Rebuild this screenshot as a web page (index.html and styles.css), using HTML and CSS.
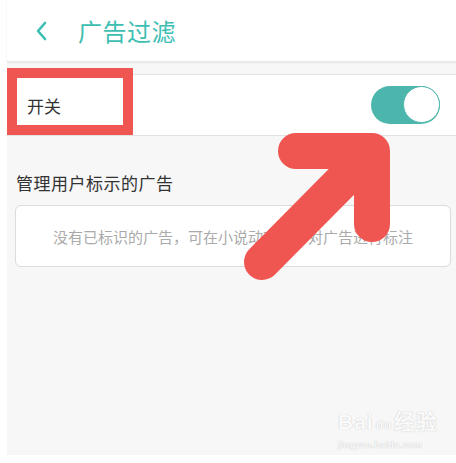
FILE: index.html
```html
<!DOCTYPE html>
<html lang="zh-CN">
<head>
    <meta charset="UTF-8">
    <meta name="viewport" content="width=device-width, initial-scale=1.0">
    <title>广告过滤</title>
    <link rel="stylesheet" href="styles.css">
</head>
<body>
    <div class="page">
        <div class="screen">
            <div class="header">
                <svg class="back" width="12" height="20" viewBox="0 0 12 20">
                    <path d="M9 2 L2 10 L9 18" fill="none" stroke="#3dbeb3" stroke-width="2.6" stroke-linecap="round" stroke-linejoin="round"/>
                </svg>
                <h1>广告过滤</h1>
            </div>

            <div class="row">
                <span class="row-label">开关</span>
                <div class="switch on">
                    <div class="knob"></div>
                </div>
            </div>

            <div class="section-title">管理用户标示的广告</div>
            <div class="card">没有已标识的广告，可在小说动态流中对广告进行标注</div>
        </div>

        <!-- annotations drawn over the screenshot -->
        <div class="mark-box"></div>
        <svg class="arrow" width="456" height="463" viewBox="0 0 456 463">
            <path d="M262 262 L372 151 M296 151 L372 151 L372 224" fill="none" stroke="#ef5551" stroke-width="36" stroke-linecap="round" stroke-linejoin="round"/>
        </svg>

        <div class="watermark">
            <div class="wm-logo">Bai<span class="paw">du</span>经验</div>
            <div class="wm-url">jingyan.baidu.com</div>
        </div>
    </div>
</body>
</html>
```

FILE: styles.css
```css
body {
    margin: 0;
    background: #fff;
    font-family: "Noto Sans CJK SC", "Noto Sans", sans-serif;
}

.page {
    position: relative;
    width: 456px;
    height: 463px;
    overflow: hidden;
}

.screen {
    margin-left: 7px;
    width: 449px;
    height: 455px;
    background: #f7f7f7;
}

.header {
    height: 61px;
    background: #fff;
    display: flex;
    align-items: center;
    box-shadow: 0 1px 2px rgba(0, 0, 0, 0.08);
    border-bottom: 1px solid #e8e8e8;
}

.back {
    margin-left: 29px;
    margin-top: 1px;
}

.header h1 {
    margin: 0 0 0 30px;
    font-size: 24px;
    font-weight: normal;
    color: #3dbeb3;
    line-height: 1;
    letter-spacing: 0.5px;
}

.row {
    margin-top: 12px;
    height: 60px;
    background: #fff;
    border-top: 1px solid #e2e2e2;
    border-bottom: 1px solid #e2e2e2;
    display: flex;
    align-items: center;
    justify-content: space-between;
    padding: 0 16px 0 20px;
}

.row-label {
    font-size: 17px;
    color: #333;
}

.switch {
    width: 69px;
    height: 38px;
    border-radius: 19px;
    background: #4db6ac;
    display: flex;
    justify-content: flex-end;
}

.knob {
    width: 35px;
    height: 35px;
    border-radius: 50%;
    background: #fff;
    border: 1.5px solid #4db6ac;
}

.section-title {
    margin: 36px 0 0 9px;
    font-size: 17px;
    line-height: 22px;
    letter-spacing: 0.5px;
    color: #333;
}

.card {
    margin: 11px 5px 0 8px;
    height: 60px;
    background: #fff;
    border: 1px solid #dcdcdc;
    border-radius: 6px;
    display: flex;
    align-items: center;
    justify-content: center;
    font-size: 15px;
    color: #aaa;
    white-space: nowrap;
}

.mark-box {
    position: absolute;
    left: 7px;
    top: 68px;
    width: 106px;
    height: 47px;
    border: 10px solid #ef5551;
}

.arrow {
    position: absolute;
    left: 0;
    top: 0;
}

.watermark {
    position: absolute;
    left: 338px;
    top: 408px;
    color: #fafafa;
    text-shadow: 0 0 1px #d0d0d0, 0 0 1px #d0d0d0;
    font-family: "Liberation Sans", sans-serif;
}

.wm-logo {
    font-size: 21px;
    font-weight: bold;
    line-height: 28px;
    letter-spacing: 1px;
}

.paw {
    font-size: 12px;
    margin: 0 2px;
}

.wm-url {
    font-size: 9px;
    line-height: 12px;
    font-weight: bold;
    letter-spacing: 0.3px;
}
```
